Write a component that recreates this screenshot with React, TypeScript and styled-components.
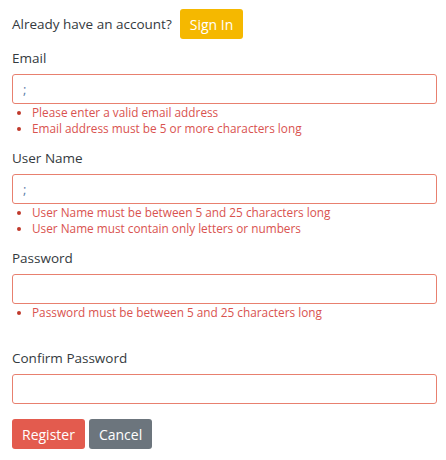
import React from "react";
import styled, { createGlobalStyle } from "styled-components";

const Global = createGlobalStyle`
  body {
    margin: 0;
    background: #ffffff;
    font-family: "Open Sans", "Liberation Sans", sans-serif;
    color: #343a40;
  }
  * { box-sizing: border-box; }
`;

const Page = styled.div`
  padding: 9px 9px 0 12px;
  display: flex;
  flex-direction: column;
`;

const TopRow = styled.div`
  display: flex;
  align-items: center;
  gap: 8px;
  margin-bottom: 9px;
  font-size: 13.5px;
  color: #343a40;
`;

const Button = styled.button<{ $bg: string }>`
  height: 30px;
  padding: 0 10px;
  border: none;
  border-radius: 3px;
  background: ${(p) => p.$bg};
  color: #ffffff;
  font-family: inherit;
  font-size: 14px;
  cursor: pointer;
`;

const Field = styled.div`
  display: flex;
  flex-direction: column;
  margin-bottom: 12px;
`;

const Label = styled.label`
  font-size: 13.5px;
  line-height: 20px;
  color: #343a40;
  margin-bottom: 6px;
`;

const Input = styled.input`
  width: 100%;
  height: 30px;
  border: 1px solid #e8806f;
  border-radius: 3px;
  padding: 0 10px;
  font-family: inherit;
  font-size: 13px;
  color: #5a7aa8;
  outline: none;
`;

const Errors = styled.ul`
  margin: 0;
  padding: 0 0 0 20px;
  min-height: 32px;
  list-style: disc;
`;

const ErrorItem = styled.li`
  font-size: 11.8px;
  line-height: 16px;
  color: #d9534f;
  &::marker {
    color: #c0392b;
  }
`;

const ButtonRow = styled.div`
  display: flex;
  gap: 4px;
  margin-top: 3px;
`;

type FieldDef = {
  label: string;
  value: string;
  type: string;
  errors?: string[];
};

const fields: FieldDef[] = [
  {
    label: "Email",
    value: ";",
    type: "text",
    errors: [
      "Please enter a valid email address",
      "Email address must be 5 or more characters long",
    ],
  },
  {
    label: "User Name",
    value: ";",
    type: "text",
    errors: [
      "User Name must be between 5 and 25 characters long",
      "User Name must contain only letters or numbers",
    ],
  },
  {
    label: "Password",
    value: "",
    type: "password",
    errors: ["Password must be between 5 and 25 characters long"],
  },
  { label: "Confirm Password", value: "", type: "password" },
];

export default function App() {
  return (
    <>
      <Global />
      <Page>
        <TopRow>
          <span>Already have an account?</span>
          <Button $bg="#f5b800">Sign In</Button>
        </TopRow>
        {fields.map((f) => (
          <Field key={f.label}>
            <Label>{f.label}</Label>
            <Input type={f.type} defaultValue={f.value} />
            {f.errors && (
              <Errors>
                {f.errors.map((e) => (
                  <ErrorItem key={e}>{e}</ErrorItem>
                ))}
              </Errors>
            )}
          </Field>
        ))}
        <ButtonRow>
          <Button $bg="#e35b4e">Register</Button>
          <Button $bg="#6c757d">Cancel</Button>
        </ButtonRow>
      </Page>
    </>
  );
}
